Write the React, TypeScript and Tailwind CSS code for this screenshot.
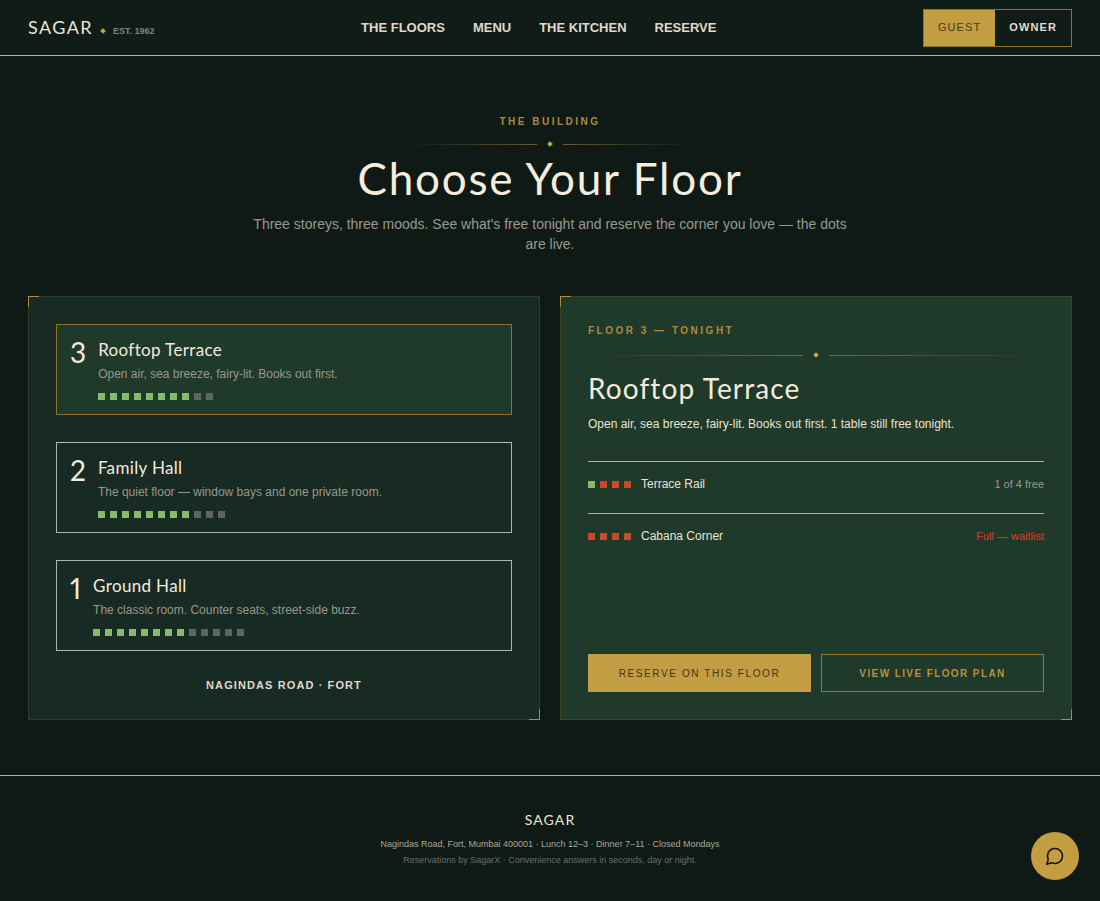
import { useState } from 'react';

interface Floor {
  level: number;
  name: string;
  blurb: string;
  lit: number;
  total: number;
}

interface Zone {
  name: string;
  free: number;
  total: number;
}

const navLinks = ['The Floors', 'Menu', 'The Kitchen', 'Reserve'];

const floors: Floor[] = [
  { level: 3, name: 'Rooftop Terrace', blurb: 'Open air, sea breeze, fairy-lit. Books out first.', lit: 8, total: 10 },
  { level: 2, name: 'Family Hall', blurb: 'The quiet floor — window bays and one private room.', lit: 8, total: 11 },
  { level: 1, name: 'Ground Hall', blurb: 'The classic room. Counter seats, street-side buzz.', lit: 8, total: 13 },
];

const zones: Zone[] = [
  { name: 'Terrace Rail', free: 1, total: 4 },
  { name: 'Cabana Corner', free: 0, total: 4 },
];

function Dots({ on, total, offClass }: { on: number; total: number; offClass: string }) {
  return (
    <span className="flex gap-[5px]">
      {Array.from({ length: total }, (_, i) => (
        <span key={i} className={`size-[7px] ${i < on ? 'bg-[#86bb6e]' : offClass}`} />
      ))}
    </span>
  );
}

function Divider() {
  return (
    <div className="flex items-center gap-[11px]">
      <span className="h-px flex-1 bg-linear-to-r from-transparent to-[#c29d42]/50" />
      <span className="size-1 rotate-45 bg-[#c9a344]" />
      <span className="h-px flex-1 bg-linear-to-l from-transparent to-[#c29d42]/50" />
    </div>
  );
}

// gold brackets on the top left and bottom right of a panel
function Corners() {
  return (
    <>
      <span className="absolute -left-px -top-px size-[11px] border-l border-t border-[#b18b3a]" />
      <span className="absolute -bottom-px -right-px size-[11px] border-b border-r border-[#b18b3a]" />
    </>
  );
}

function RoleSwitch() {
  const [role, setRole] = useState('Guest');

  return (
    <div className="flex border border-[#8f7030]">
      {['Guest', 'Owner'].map((r) => (
        <button
          key={r}
          type="button"
          aria-pressed={role === r}
          onClick={() => setRole(r)}
          className={`h-9 px-3.5 text-[11px] uppercase tracking-[0.1em] ${
            role === r ? 'bg-[#c29d42] text-[#4a3a17]' : 'font-bold text-[#e6ddcf]'
          }`}
        >
          {r}
        </button>
      ))}
    </div>
  );
}

function Header() {
  return (
    <header className="flex h-14 items-center justify-between border-b border-[#b3b5b3] bg-[#101c18] px-7">
      <a href="#" className="flex items-baseline gap-2 pb-0.5">
        <span className="font-['Lato',sans-serif] text-lg tracking-[0.08em] text-[#efe5d8]">SAGAR</span>
        <span className="mb-2 size-1 rotate-45 self-end bg-[#c9a344]" />
        <span className="text-[9px] font-bold text-[#7f857c]">EST. 1962</span>
      </a>
      <nav className="flex gap-7">
        {navLinks.map((link) => (
          <a key={link} href="#" className="text-[13px] font-bold uppercase text-[#e0d8cb]">
            {link}
          </a>
        ))}
      </nav>
      <RoleSwitch />
    </header>
  );
}

function FloorCard({ floor, active }: { floor: Floor; active: boolean }) {
  return (
    <button
      type="button"
      aria-pressed={active}
      className={`flex items-start gap-3 border px-[13px] pb-3.5 pt-[13px] text-left ${
        active ? 'border-[#94722f] bg-[#1f392b]' : 'border-[#b3b5b3]'
      }`}
    >
      <span className="font-['Lato',sans-serif] text-[28px] leading-7 text-[#f4eadc] proportional-nums">
        {floor.level}
      </span>
      <span className="block">
        <span className="block font-['Lato',sans-serif] text-[17px] leading-6 tracking-[0.02em] text-[#f4eadc]">
          {floor.name}
        </span>
        <span className="mt-0.5 mb-[9px] block text-xs leading-5 text-[#98998c]">{floor.blurb}</span>
        <Dots on={floor.lit} total={floor.total} offClass="bg-[#5d665f]" />
      </span>
    </button>
  );
}

function FloorDetail() {
  return (
    <section className="relative flex flex-col border border-[#3d4529] bg-[#1f392b] p-[27px]">
      <Corners />
      <p className="text-[10px] leading-[14px] font-bold uppercase tracking-[0.25em] text-[#b08a38]">
        Floor 3 — Tonight
      </p>
      <div className="mt-[15px]">
        <Divider />
      </div>
      <h2 className="mt-[13px] font-['Lato',sans-serif] text-[28px] leading-9 tracking-[0.04em] text-[#f4eadc]">
        Rooftop Terrace
      </h2>
      <p className="mt-2 text-xs leading-5 text-[#ebe2d4]">
        Open air, sea breeze, fairy-lit. Books out first. 1 table still free tonight.
      </p>
      <ul className="mt-[27px]">
        {zones.map((zone) => (
          <li key={zone.name} className="flex h-[52px] items-start gap-2.5 border-t border-[#a9afaa] pt-3">
            <span className="flex h-5 items-center">
              <Dots on={zone.free} total={zone.total} offClass="bg-[#cf4630]" />
            </span>
            <span className="flex-1 text-xs leading-5 text-[#ebe2d4]">{zone.name}</span>
            {zone.free > 0 ? (
              <span className="text-[11px] leading-5 text-[#98998c]">
                {zone.free} of {zone.total} free
              </span>
            ) : (
              <span className="text-[11px] leading-5 text-[#cf4630]">Full — waitlist</span>
            )}
          </li>
        ))}
      </ul>
      <div className="mt-auto grid grid-cols-2 gap-2.5">
        <button type="button" className="h-[38px] bg-[#c29d42] text-[10px] uppercase tracking-[0.16em] text-[#44351a]">
          Reserve on this floor
        </button>
        <button
          type="button"
          className="h-[38px] border border-[#94762f] text-[10px] font-bold uppercase tracking-[0.14em] text-[#b8913b]"
        >
          View live floor plan
        </button>
      </div>
    </section>
  );
}

function App() {
  return (
    <div className="flex min-h-screen flex-col bg-[#0f1a17] font-['Liberation_Sans',Arial,sans-serif]">
      <Header />

      <main className="px-7 pb-[55px] pt-[59px]">
        <div className="mx-auto max-w-[600px] text-center">
          <p className="text-[10px] leading-[14px] font-bold uppercase tracking-[0.25em] text-[#b08a38]">
            The Building
          </p>
          <div className="mx-auto mt-[13px] max-w-[280px]">
            <Divider />
          </div>
          <h1 className="mt-1.5 font-['Lato',sans-serif] text-[44px] leading-[52px] tracking-[0.04em] text-[#f8ecdd]">
            Choose Your Floor
          </h1>
          <p className="mt-2.5 text-sm leading-5 text-[#98998c]">
            Three storeys, three moods. See what's free tonight and reserve the corner you love — the dots are live.
          </p>
        </div>

        <div className="mt-[42px] grid grid-cols-2 gap-5">
          <section className="relative flex flex-col gap-[27px] border border-[#2f3b27] bg-[#172a24] p-[27px]">
            <Corners />
            {floors.map((floor) => (
              <FloorCard key={floor.level} floor={floor} active={floor.level === 3} />
            ))}
            <p className="text-center text-[11px] leading-[14px] font-bold uppercase tracking-[0.1em] text-[#e0d8cb]">
              Nagindas Road · Fort
            </p>
          </section>
          <FloorDetail />
        </div>
      </main>

      <footer className="flex-1 border-t border-[#a9aba9] pt-[34px] text-center">
        <p className="font-['Lato',sans-serif] text-sm leading-5 tracking-[0.08em] text-[#efe5d8]">SAGAR</p>
        <p className="mt-1.5 text-[9px] leading-4 text-[#a9aa9c]">
          Nagindas Road, Fort, Mumbai 400001 · Lunch 12–3 · Dinner 7–11 · Closed Mondays
        </p>
        <p className="text-[9px] leading-4 text-[#6b6f67]">
          Reservations by SagarX · Convenience answers in seconds, day or night.
        </p>
      </footer>

      <button
        type="button"
        aria-label="Chat"
        className="fixed bottom-[21px] right-[21px] flex size-12 items-center justify-center rounded-full bg-[#c29d42] text-[#17150c]"
      >
        <svg viewBox="0 0 24 24" className="size-5" fill="none" stroke="currentColor" strokeWidth="1.8" strokeLinecap="round" strokeLinejoin="round">
          <path d="M7.9 20A9 9 0 1 0 4 16.1L2 22Z" />
        </svg>
      </button>
    </div>
  );
}

export default App;
